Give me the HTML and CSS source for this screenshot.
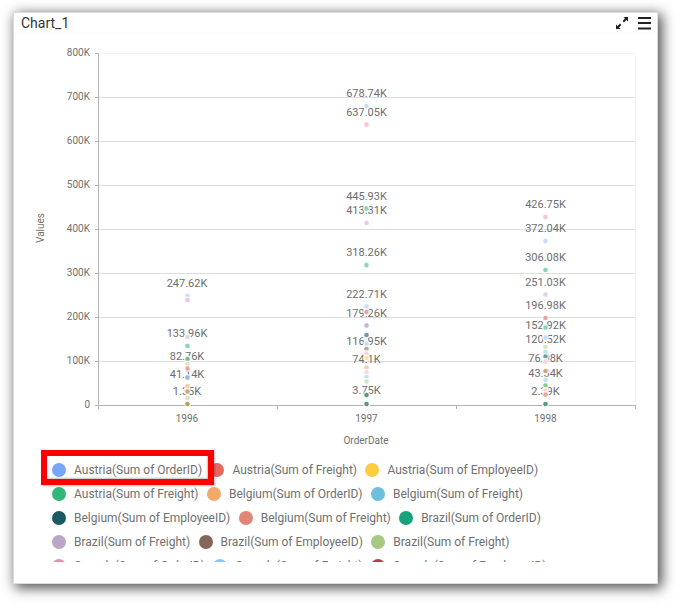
FILE: index.html
```html
<!DOCTYPE html>
<html lang="en">
<head>
<meta charset="utf-8">
<title>Chart_1</title>
<link rel="stylesheet" href="styles.css">
</head>
<body>
<main class="card">
  <header class="head">
    <h1 class="title">Chart_1</h1>
    <div class="tools">
      <svg class="icon" width="12" height="12" viewBox="0 0 12 12" aria-hidden="true">
        <path class="ink" d="M12 0H7.4L9 1.6 6.6 4 8 5.4 10.4 3 12 4.6ZM0 12H4.6L3 10.4 5.4 8 4 6.6 1.6 9 0 7.4Z"/>
      </svg>
      <svg class="icon" width="13" height="13" viewBox="0 0 13 13" aria-hidden="true">
        <path class="ink" d="M0 0H13V2H0ZM0 5H13V7H0ZM0 10.500H13V12.500H0Z"/>
      </svg>
    </div>
  </header>
  <svg class="chart" width="643" height="414" viewBox="14 34 643 414" role="img" aria-label="Chart">
    <rect class="frame" x="98.500" y="53.500" width="537" height="352"/>
    <g class="grid">
      <path d="M98 97.500H635M98 141.500H635M98 185.500H635M98 229.500H635M98 273.500H635M98 317.500H635M98 361.500H635"/>
    </g>
    <path class="axis" d="M98.500 53V405M95 53.500H98M95 97.500H98M95 141.500H98M95 185.500H98M95 229.500H98M95 273.500H98M95 317.500H98M95 361.500H98M95 405.500H635M98.500 405V409M277.500 405V409M456.500 405V409M635.500 405V409"/>
    <g class="tick-y">
      <text x="90" y="56">800K</text><text x="90" y="100">700K</text><text x="90" y="144">600K</text>
      <text x="90" y="188">500K</text><text x="90" y="232">400K</text><text x="90" y="276">300K</text>
      <text x="90" y="320">200K</text><text x="90" y="364">100K</text><text x="90" y="408">0</text>
    </g>
    <g class="tick-x">
      <text x="187" y="422">1996</text><text x="366.500" y="422">1997</text><text x="545.500" y="422">1998</text>
      <text x="366" y="444" class="axis-name">OrderDate</text>
    </g>
    <text class="axis-name-y" transform="translate(44 228) rotate(-90)">Values</text>
    <g class="labels">
      <text x="187" y="287">247.62K</text><text x="187" y="337">133.96K</text><text x="187" y="360">82.76K</text>
      <text x="187" y="378">41.14K</text><text x="187" y="395">1.35K</text>
      <text x="366.500" y="97">678.74K</text><text x="366.500" y="116">637.05K</text><text x="366.500" y="200">445.93K</text>
      <text x="366.500" y="214">413.31K</text><text x="366.500" y="256">318.26K</text><text x="366.500" y="298">222.71K</text>
      <text x="366.500" y="317">179.26K</text><text x="366.500" y="345">116.95K</text><text x="366.500" y="363">74.1K</text>
      <text x="366.500" y="394">3.75K</text>
      <text x="545.500" y="208">426.75K</text><text x="545.500" y="232">372.04K</text><text x="545.500" y="261">306.08K</text>
      <text x="545.500" y="286">251.03K</text><text x="545.500" y="309">196.98K</text><text x="545.500" y="329">152.92K</text>
      <text x="545.500" y="343">120.52K</text><text x="545.500" y="362">76.08K</text><text x="545.500" y="377">43.34K</text>
      <text x="545.500" y="395">2.39K</text>
    </g>
    <g class="dots">
      <circle class="d-sky" cx="187.500" cy="296" r="2.800"/><circle class="d-pink" cx="187.500" cy="300" r="2.800"/>
      <circle class="d-lav" cx="187.500" cy="337" r="2.800"/><circle class="d-mint" cx="187.500" cy="346" r="2.800"/>
      <circle class="d-green" cx="187.500" cy="359" r="2.800"/><circle class="d-blush" cx="187.500" cy="364" r="2.800"/>
      <circle class="d-rose" cx="187.500" cy="368.500" r="2.800"/><circle class="d-blue" cx="187.500" cy="377.500" r="2.800"/>
      <circle class="d-peach" cx="187.500" cy="386" r="2.800"/><circle class="d-tan" cx="187.500" cy="391.500" r="2.800"/>
      <circle class="d-pale" cx="187.500" cy="398" r="2.800"/><circle class="d-olive" cx="187.500" cy="404" r="2.800"/>

      <circle class="d-sky" cx="366.500" cy="106" r="2.800"/><circle class="d-pink" cx="366.500" cy="124.500" r="2.800"/>
      <circle class="d-mint" cx="366.500" cy="208.500" r="2.800"/><circle class="d-lav" cx="366.500" cy="223" r="2.800"/>
      <circle class="d-mint" cx="366.500" cy="265" r="2.800"/><circle class="d-sky" cx="366.500" cy="306.500" r="2.800"/>
      <circle class="d-rose" cx="366.500" cy="312" r="2.800"/><circle class="d-violet" cx="366.500" cy="325.500" r="2.800"/>
      <circle class="d-teal" cx="366.500" cy="335" r="2.800"/><circle class="d-ice" cx="366.500" cy="344" r="2.800"/>
      <circle class="d-taupe" cx="366.500" cy="349" r="2.800"/><circle class="d-blush" cx="366.500" cy="353.500" r="2.800"/>
      <circle class="d-yellow" cx="366.500" cy="358" r="2.800"/><circle class="d-peach" cx="366.500" cy="367.500" r="2.800"/>
      <circle class="d-blush" cx="366.500" cy="372.500" r="2.800"/><circle class="d-ice" cx="366.500" cy="377" r="2.800"/>
      <circle class="d-pale" cx="366.500" cy="381.500" r="2.800"/><circle class="d-forest" cx="366.500" cy="395" r="2.800"/>
      <circle class="d-forest" cx="366.500" cy="404" r="2.800"/>

      <circle class="d-pink" cx="545.500" cy="217" r="2.800"/><circle class="d-sky" cx="545.500" cy="241" r="2.800"/>
      <circle class="d-mint" cx="545.500" cy="270" r="2.800"/><circle class="d-lav" cx="545.500" cy="294.500" r="2.800"/>
      <circle class="d-rose" cx="545.500" cy="318" r="2.800"/><circle class="d-mint" cx="545.500" cy="327.500" r="2.800"/>
      <circle class="d-sky" cx="545.500" cy="337.500" r="2.800"/><circle class="d-pale" cx="545.500" cy="347" r="2.800"/>
      <circle class="d-ice" cx="545.500" cy="352" r="2.800"/><circle class="d-teal" cx="545.500" cy="356.500" r="2.800"/>
      <circle class="d-blush" cx="545.500" cy="361.500" r="2.800"/><circle class="d-tan" cx="545.500" cy="371" r="2.800"/>
      <circle class="d-ice" cx="545.500" cy="380" r="2.800"/><circle class="d-lime" cx="545.500" cy="385.500" r="2.800"/>
      <circle class="d-blush" cx="545.500" cy="390.500" r="2.800"/><circle class="d-rose" cx="545.500" cy="394.500" r="2.800"/>
      <circle class="d-forest" cx="545.500" cy="404" r="2.800"/>
    </g>
  </svg>
  <ul class="legend">
    <li class="item"><span class="mark m1"></span>Austria(Sum of OrderID)</li>
    <li class="item"><span class="mark m2"></span>Austria(Sum of Freight)</li>
    <li class="item"><span class="mark m3"></span>Austria(Sum of EmployeeID)</li>
    <li class="item"><span class="mark m4"></span>Austria(Sum of Freight)</li>
    <li class="item"><span class="mark m5"></span>Belgium(Sum of OrderID)</li>
    <li class="item"><span class="mark m6"></span>Belgium(Sum of Freight)</li>
    <li class="item"><span class="mark m7"></span>Belgium(Sum of EmployeeID)</li>
    <li class="item"><span class="mark m8"></span>Belgium(Sum of Freight)</li>
    <li class="item"><span class="mark m9"></span>Brazil(Sum of OrderID)</li>
    <li class="item"><span class="mark m10"></span>Brazil(Sum of Freight)</li>
    <li class="item"><span class="mark m11"></span>Brazil(Sum of EmployeeID)</li>
    <li class="item"><span class="mark m12"></span>Brazil(Sum of Freight)</li>
    <li class="item"><span class="mark m13"></span>Canada(Sum of OrderID)</li>
    <li class="item"><span class="mark m14"></span>Canada(Sum of Freight)</li>
    <li class="item"><span class="mark m15"></span>Canada(Sum of EmployeeID)</li>
  </ul>
  <div class="highlight"></div>
</main>
</body>
</html>
```
FILE: styles.css
```css
* { box-sizing: border-box; }
html, body { margin: 0; padding: 0; background: #fff; overflow: hidden; }
body { width: 678px; height: 606px; padding: 12px 0 0 13px; font-family: Roboto, "Liberation Sans", sans-serif; }

.card {
  position: relative;
  width: 645px;
  height: 572px;
  background: #fff;
  border: 1px solid #dcdcdc;
  box-shadow: 3px 3px 12px 1px #4f4f4f;
}

.head {
  display: flex;
  align-items: center;
  justify-content: space-between;
  height: 21px;
  padding: 0 6px 0 7px;
  border-bottom: 1px solid #fafafa;
}
.title { margin: 0; font-size: 14px; font-weight: 400; color: #333; line-height: 21px; }
.tools { display: flex; align-items: center; gap: 10px; }
.icon { display: block; }
.ink { fill: #222; }

.chart { display: block; }
.frame { fill: none; stroke: #f4f4f4; stroke-width: 1; }
.grid path { fill: none; stroke: #dedede; stroke-width: 1; }
.axis { fill: none; stroke: #b4b4b4; stroke-width: 1; }

.tick-y text { font-size: 10px; fill: #707070; text-anchor: end; }
.tick-x text { font-size: 10px; fill: #707070; text-anchor: middle; }
.axis-name-y { font-size: 10px; fill: #707070; text-anchor: middle; }
.labels text { font-size: 11px; fill: #6e6e6e; text-anchor: middle; }

.dots circle { stroke: #fff; stroke-width: 1.2; stroke-opacity: 0.8; }
.d-sky { fill: #c6defc; }
.d-pink { fill: #fbc3d6; }
.d-lav { fill: #e0d3e6; }
.d-mint { fill: #8dd5ba; }
.d-green { fill: #6fc09c; }
.d-blush { fill: #f6d5d6; }
.d-rose { fill: #eaa5a0; }
.d-blue { fill: #93b6e2; }
.d-peach { fill: #f6cda8; }
.d-tan { fill: #cfa57c; }
.d-pale { fill: #d5e5c4; }
.d-olive { fill: #b5a562; }
.d-violet { fill: #b9b9ee; }
.d-teal { fill: #6f9fa5; }
.d-ice { fill: #bde3f0; }
.d-taupe { fill: #baa49e; }
.d-yellow { fill: #ffe29c; }
.d-forest { fill: #5c9a78; }
.d-lime { fill: #8ccb85; }

.legend {
  display: flex;
  flex-wrap: wrap;
  align-content: flex-start;
  list-style: none;
  width: 590px;
  height: 104px;
  margin: 10px 0 0 38px;
  padding: 0;
  overflow: hidden;
}
.item {
  display: flex;
  align-items: center;
  gap: 8px;
  height: 24px;
  margin-right: 8.4px;
  font-size: 12px;
  color: #707070;
  white-space: nowrap;
}
.mark { width: 14px; height: 14px; border-radius: 50%; flex: none; }
.m1 { background: #78a6ff; }
.m2 { background: #e5695f; }
.m3 { background: #ffcb3f; }
.m4 { background: #33b679; }
.m5 { background: #f2a96a; }
.m6 { background: #6cc0dc; }
.m7 { background: #195962; }
.m8 { background: #e08676; }
.m9 { background: #14a37a; }
.m10 { background: #bca6c8; }
.m11 { background: #846659; }
.m12 { background: #a5c882; }
.m13 { background: #f08aa8; }
.m14 { background: #8ec4f8; }
.m15 { background: #c0394e; }

.highlight {
  position: absolute;
  left: 27px;
  top: 437px;
  width: 173px;
  height: 35px;
  border: 6px solid #f00;
  box-shadow: inset -1px -1px 2px rgba(0,0,0,.25), 1px 1px 2px rgba(0,0,0,.25);
}
```
